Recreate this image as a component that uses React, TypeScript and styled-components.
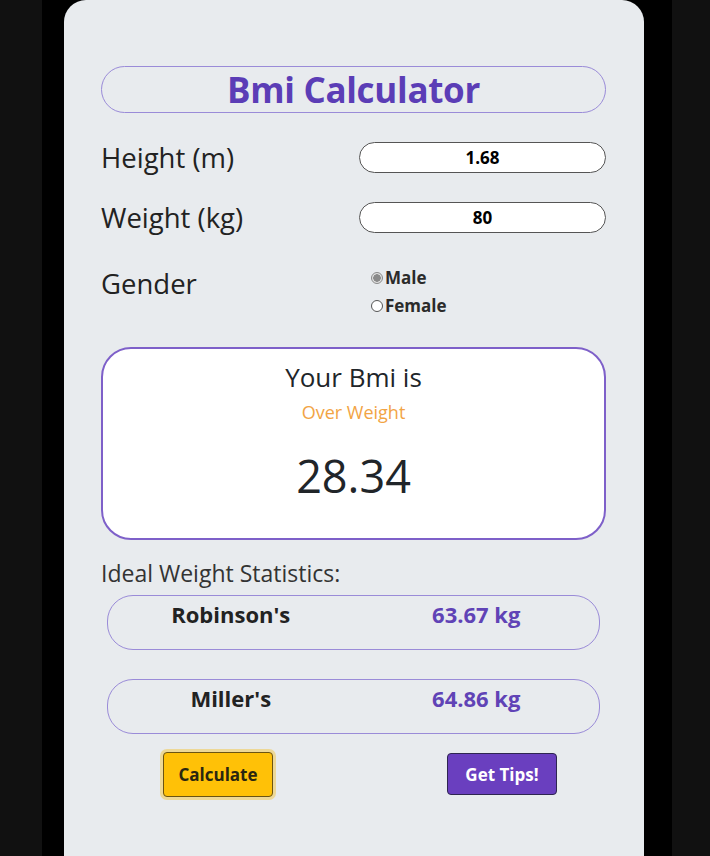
import React from "react";
import styled, { createGlobalStyle } from "styled-components";

const Global = createGlobalStyle`
  html, body { margin: 0; padding: 0; overflow: hidden; }
  body {
    background: #111111;
    font-family: "Open Sans", "Noto Sans", sans-serif;
    color: #212529;
  }
`;

const Stage = styled.div`
  width: 630px;
  height: 856px;
  margin-left: 42px;
  background: #000;
  padding: 0 28px 0 22px;
  box-sizing: border-box;
`;

const Card = styled.main`
  height: 100%;
  background: #e8ebee;
  border-radius: 22px 22px 0 0;
  padding: 66px 38px 0 37px;
  box-sizing: border-box;
  display: flex;
  flex-direction: column;
`;

const Title = styled.h1`
  margin: 0;
  height: 47px;
  box-sizing: border-box;
  border: 1px solid #9a8bd8;
  border-radius: 24px;
  display: flex;
  align-items: center;
  justify-content: center;
  font-size: 35px;
  font-weight: 700;
  color: #5b3db6;
  letter-spacing: -0.3px;
`;

const FieldRow = styled.div<{ $top: number }>`
  display: grid;
  grid-template-columns: 258px 1fr;
  align-items: center;
  height: 31px;
  margin-top: ${(p) => p.$top}px;
`;

const Label = styled.label`
  font-size: 27.5px;
  color: #222;
  line-height: 1;
`;

const NumInput = styled.input`
  height: 31px;
  box-sizing: border-box;
  border: 1px solid #555;
  border-radius: 16px;
  background: #fff;
  text-align: center;
  font-family: inherit;
  font-size: 17px;
  font-weight: 700;
  color: #000;
  outline: none;
  padding: 0;
`;

const GenderRow = styled.div`
  display: grid;
  grid-template-columns: 270px 1fr;
  margin-top: 32px;
  align-items: start;
`;

const GenderLabel = styled(Label)`
  margin-top: 5px;
`;

const RadioList = styled.div`
  display: flex;
  flex-direction: column;
  gap: 7px;
  padding-top: 2px;
`;

const RadioItem = styled.label`
  display: flex;
  align-items: center;
  font-size: 17px;
  font-weight: 700;
  color: #2b2b2b;
  line-height: 21px;
`;

const RadioDot = styled.span<{ $checked?: boolean }>`
  width: 12px;
  height: 12px;
  border-radius: 50%;
  box-sizing: border-box;
  border: 1px solid ${(p) => (p.$checked ? "#8a8a8a" : "#555")};
  background: ${(p) => (p.$checked ? "radial-gradient(circle, #8a8a8a 0 3.5px, #e0e0e0 4px)" : "#fff")};
  margin-right: 2px;
`;

const ResultBox = styled.section`
  margin-top: 31px;
  height: 193px;
  box-sizing: border-box;
  border: 2px solid #7e60c9;
  border-radius: 30px;
  background: #fff;
  display: flex;
  flex-direction: column;
  align-items: center;
`;

const ResultHead = styled.div`
  margin-top: 12px;
  font-size: 26px;
  line-height: 32px;
  color: #212529;
`;

const Category = styled.div`
  margin-top: 8px;
  font-size: 18px;
  line-height: 22px;
  color: #f2a444;
`;

const BmiValue = styled.div`
  margin-top: 26px;
  font-size: 45px;
  line-height: 54px;
  color: #212529;
`;

const StatsTitle = styled.div`
  margin-top: 18px;
  font-size: 23px;
  line-height: 30px;
  color: #333;
`;

const StatBox = styled.div<{ $top: number }>`
  margin: ${(p) => p.$top}px 6px 0;
  height: 55px;
  box-sizing: border-box;
  border: 1px solid #9a8bd8;
  border-radius: 26px;
  display: grid;
  grid-template-columns: 1fr 1fr;
  padding-top: 4px;
`;

const StatName = styled.div`
  text-align: center;
  font-size: 22px;
  font-weight: 700;
  color: #222;
  line-height: 28px;
`;

const StatValue = styled(StatName)`
  color: #6043b6;
`;

const Buttons = styled.div`
  margin-top: 18px;
  display: flex;
  justify-content: space-between;
  padding: 0 49px 0 62px;
  align-items: flex-start;
`;

const Btn = styled.button<{ $variant: "warning" | "purple" }>`
  width: 110px;
  height: ${(p) => (p.$variant === "warning" ? 45 : 42)}px;
  margin-top: ${(p) => (p.$variant === "warning" ? 0 : 1)}px;
  border-radius: 4px;
  font-family: inherit;
  font-size: 17px;
  font-weight: 700;
  cursor: pointer;
  background: ${(p) => (p.$variant === "warning" ? "#ffc107" : "#6a3fbf")};
  color: ${(p) => (p.$variant === "warning" ? "#2a2610" : "#fff")};
  border: 1px solid ${(p) => (p.$variant === "warning" ? "#6b5412" : "#2e2550")};
  box-shadow: ${(p) => (p.$variant === "warning" ? "0 0 0 3px rgba(240, 200, 80, 0.55)" : "none")};
`;

export default function App() {
  return (
    <>
      <Global />
      <Stage>
        <Card>
          <Title>Bmi Calculator</Title>
          <FieldRow $top={29}>
            <Label>Height (m)</Label>
            <NumInput defaultValue="1.68" />
          </FieldRow>
          <FieldRow $top={29}>
            <Label>Weight (kg)</Label>
            <NumInput defaultValue="80" />
          </FieldRow>
          <GenderRow>
            <GenderLabel>Gender</GenderLabel>
            <RadioList>
              <RadioItem>
                <RadioDot $checked />
                Male
              </RadioItem>
              <RadioItem>
                <RadioDot />
                Female
              </RadioItem>
            </RadioList>
          </GenderRow>
          <ResultBox>
            <ResultHead>Your Bmi is</ResultHead>
            <Category>Over Weight</Category>
            <BmiValue>28.34</BmiValue>
          </ResultBox>
          <StatsTitle>Ideal Weight Statistics:</StatsTitle>
          <StatBox $top={7}>
            <StatName>Robinson's</StatName>
            <StatValue>63.67 kg</StatValue>
          </StatBox>
          <StatBox $top={29}>
            <StatName>Miller's</StatName>
            <StatValue>64.86 kg</StatValue>
          </StatBox>
          <Buttons>
            <Btn $variant="warning">Calculate</Btn>
            <Btn $variant="purple">Get Tips!</Btn>
          </Buttons>
        </Card>
      </Stage>
    </>
  );
}
